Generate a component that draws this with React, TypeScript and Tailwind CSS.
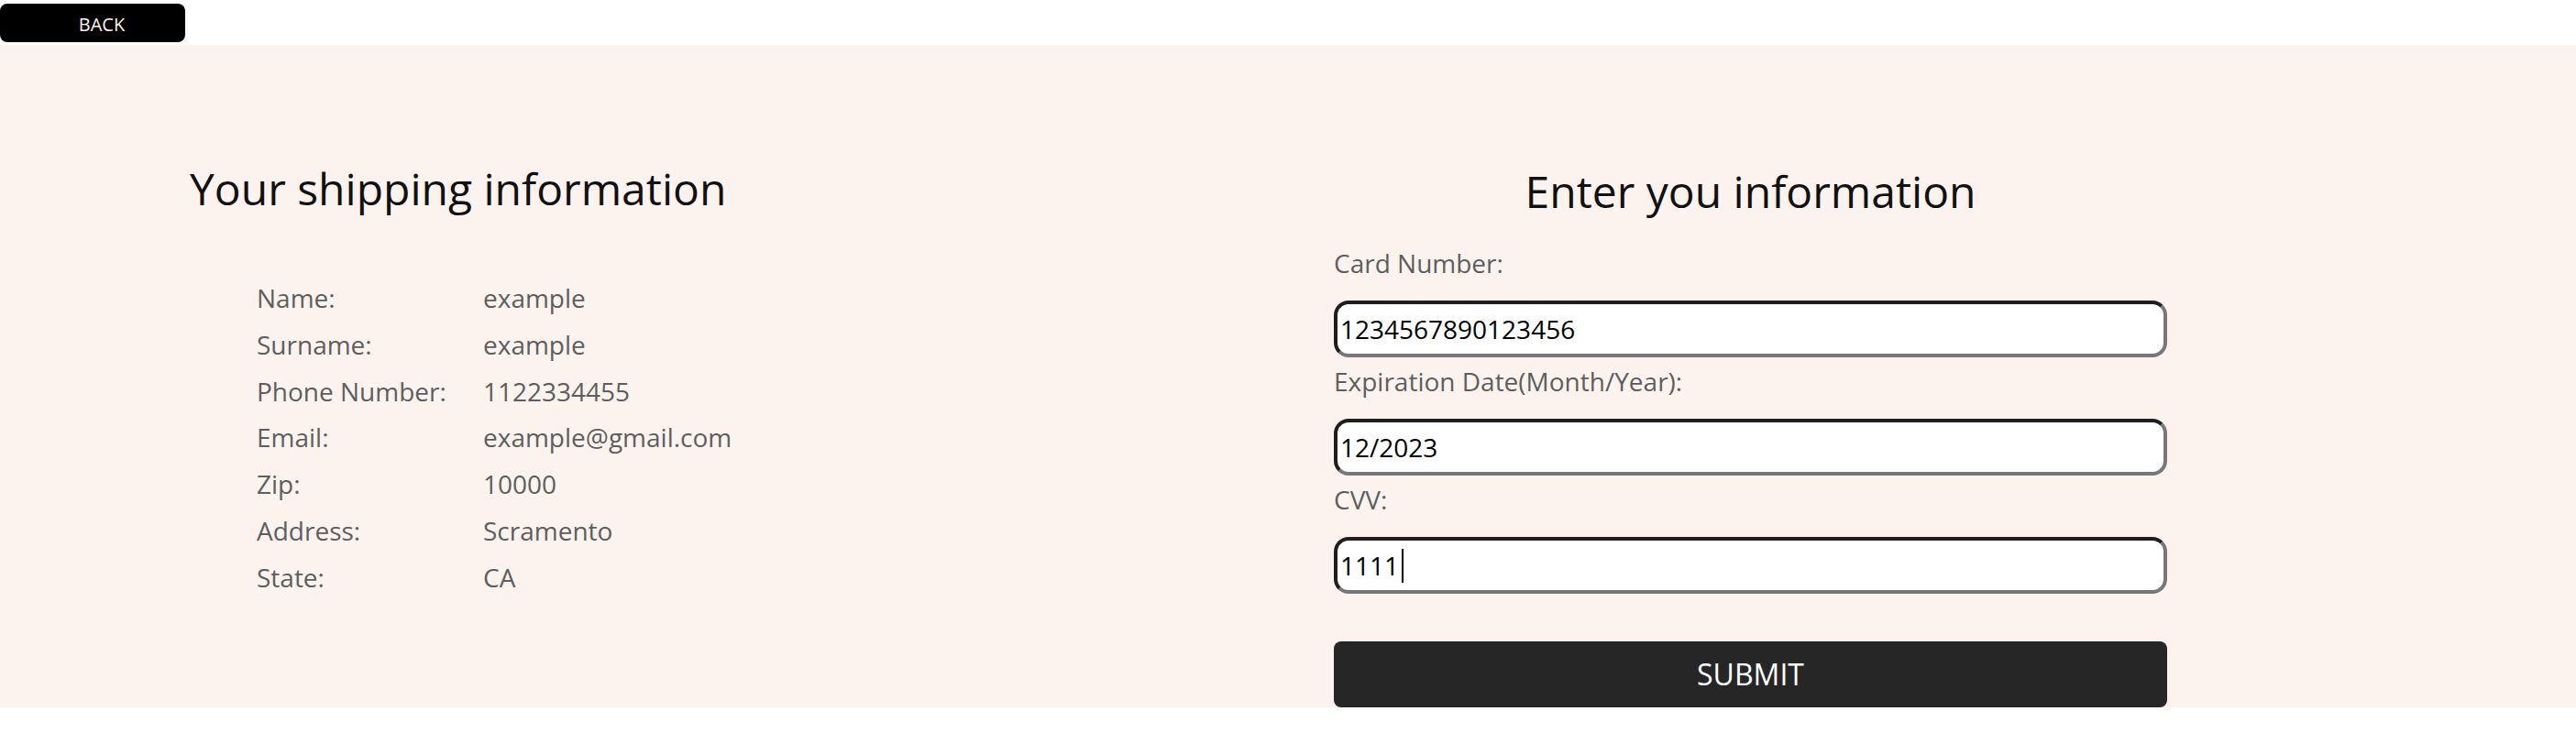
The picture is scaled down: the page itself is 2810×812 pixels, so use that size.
import React from "react";

const shipping: [string, string][] = [
  ["Name:", "example"],
  ["Surname:", "example"],
  ["Phone Number:", "1122334455"],
  ["Email:", "example@gmail.com"],
  ["Zip:", "10000"],
  ["Address:", "Scramento"],
  ["State:", "CA"],
];

function Field({ label, value, caret, first }: { label: string; value: string; caret?: boolean; first?: boolean }) {
  return (
    <div className={first ? "mt-[26px]" : "mt-[7px]"}>
      <div className="text-[28px] leading-[38px] text-[#5e5e5e]">{label}</div>
      <div className="mt-[22px] h-[62px] flex items-center bg-white rounded-[16px] border-[4px] border-t-[#1e1e1e] border-l-[#1e1e1e] border-b-[#777777] border-r-[#777777] pl-[3px] text-[28px] text-black">
        <span>{value}</span>
        {caret && <span className="inline-block w-[2px] h-[37px] bg-black ml-[3px]" />}
      </div>
    </div>
  );
}

export default function App() {
  return (
    <div className="bg-white font-['Open_Sans',sans-serif] min-h-[812px]">
      <div className="h-[49px] pt-[4px]">
        <button className="w-[202px] h-[42px] bg-black rounded-[8px] pl-[20px] pt-[3px] text-[20px] text-[#fdf3ee] leading-none">
          BACK
        </button>
      </div>
      <section className="bg-[#fdf3ee] h-[723px] flex">
        <div className="w-[1455px] pl-[207px] pt-[124px]">
          <h2 className="text-[48px] leading-[66px] text-[#111111]">Your shipping information</h2>
          <div className="mt-[61px] pl-[73px]">
            {shipping.map(([k, v]) => (
              <div key={k} className="flex text-[28px] leading-[50.8px] text-[#5e5e5e]">
                <div className="w-[247px]">{k}</div>
                <div>{v}</div>
              </div>
            ))}
          </div>
        </div>
        <div className="w-[909px] pt-[127px] flex flex-col">
          <h2 className="text-[48px] leading-[66px] text-center text-[#111111]">Enter you information</h2>
          <Field first label="Card Number:" value="1234567890123456" />
          <Field label="Expiration Date(Month/Year):" value="12/2023" />
          <Field label="CVV:" value="1111" caret />
          <button className="mt-[52px] h-[72px] shrink-0 bg-[#262626] rounded-[8px] text-white text-[32px]">SUBMIT</button>
        </div>
      </section>
    </div>
  );
}
